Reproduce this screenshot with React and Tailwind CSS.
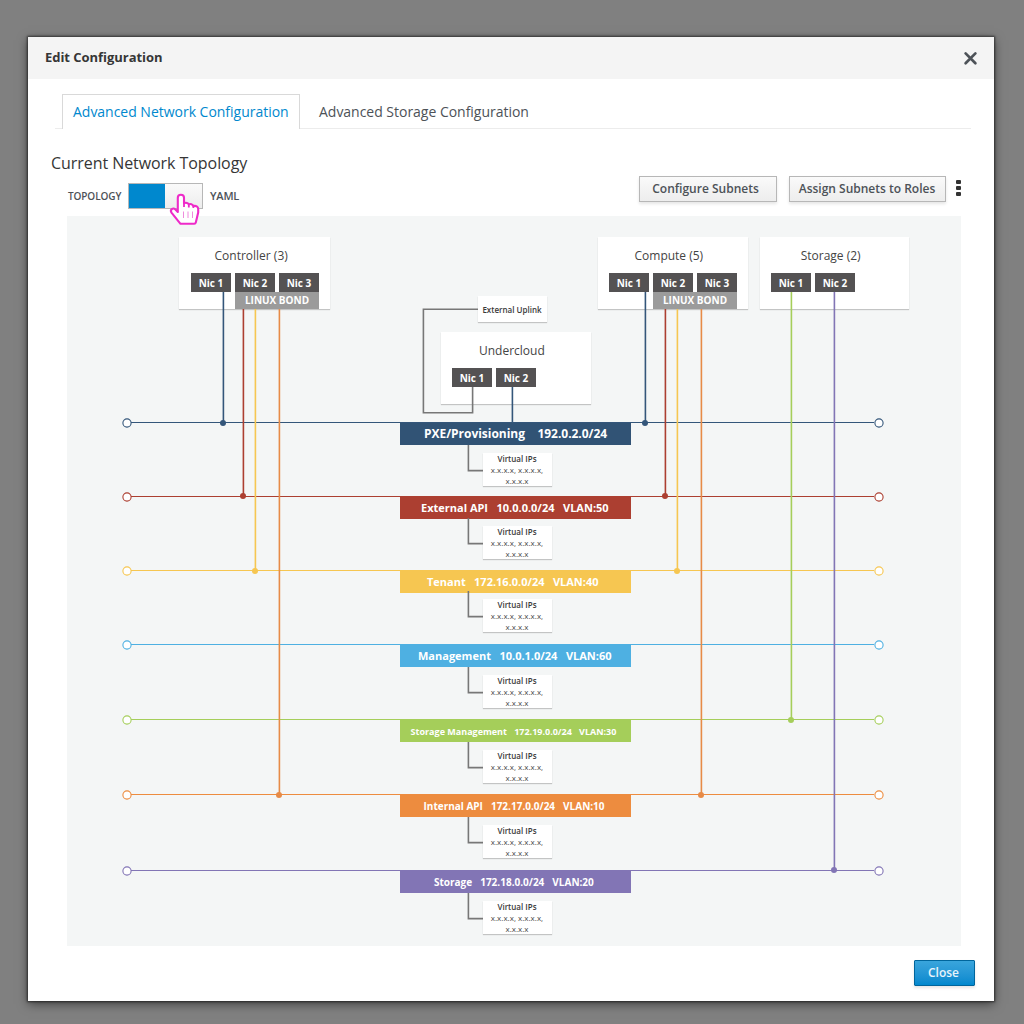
const NETWORKS = [
  { rail: 422, color: "#34567a", bg: "bg-[#315375]", ring: 423, vip: 453, tail: 445, text: "text-[12px] pl-[24px] gap-[12.5px] leading-[23px] tracking-[-0.03px]", parts: ["PXE/Provisioning", "192.0.2.0/24"] },
  { rail: 496, color: "#ac3f31", bg: "bg-[#ac3f31]", ring: 497, vip: 526, tail: 518, text: "text-[11px] pl-[21px] gap-[8.5px] leading-[24px]", parts: ["External API", "10.0.0.0/24", "VLAN:50"] },
  { rail: 570, color: "#f6c651", bg: "bg-[#f6c651]", ring: 571, vip: 599, tail: 591, text: "text-[11px] pl-[27px] gap-[8.3px] leading-[24px]", parts: ["Tenant", "172.16.0.0/24", "VLAN:40"] },
  { rail: 644, color: "#4eb0e2", bg: "bg-[#4eb0e2]", ring: 645, vip: 675, tail: 667, text: "text-[11px] pl-[18px] gap-[8.5px] leading-[24px]", parts: ["Management", "10.0.1.0/24", "VLAN:60"] },
  { rail: 719, color: "#a5ce5a", bg: "bg-[#a5ce5a]", ring: 720, vip: 750, tail: 742, text: "text-[9px] pl-[10.6px] gap-[7.2px] leading-[25px]", parts: ["Storage Management", "172.19.0.0/24", "VLAN:30"] },
  { rail: 794, color: "#ed8c3f", bg: "bg-[#ed8c3f]", ring: 795, vip: 825, tail: 817, text: "text-[10px] pl-[23.5px] gap-[8px] leading-[24px]", parts: ["Internal API", "172.17.0.0/24", "VLAN:10"] },
  { rail: 870, color: "#8275b5", bg: "bg-[#8275b5]", ring: 871, vip: 901, tail: 893, text: "text-[10px] pl-[34px] gap-[8px] leading-[24px]", parts: ["Storage", "172.18.0.0/24", "VLAN:20"] },
];

const WIRES = [
  [223.4, 292, 423, "#34567a"], [243.4, 309, 496, "#ac3f31"], [255.4, 309, 571, "#f6c651"], [279.4, 309, 795, "#e78b47"],
  [645.4, 292, 423, "#34567a"], [665.4, 309, 496, "#ac3f31"], [677.4, 309, 571, "#f6c651"], [701.4, 309, 795, "#e78b47"],
  [791.4, 292, 720, "#a5ce5a"], [834.4, 292, 870, "#8275b5"],
];

function NodeCard({ place, title, titlePad, nics, bond }) {
  return (
    <div className={"absolute h-[72px] bg-white shadow-[0_1px_1px_rgba(0,0,0,0.2)] " + place}>
      <div className={"h-[36px] whitespace-nowrap pt-[9px] text-[12px] leading-[20px] text-[#444] " + titlePad}>{title}</div>
      <div className="flex gap-1">
        {nics.map((n) => (
          <div key={n} className="h-[19px] w-10 bg-[#545253] text-center text-[10px] font-bold leading-[20px] text-white">{n}</div>
        ))}
      </div>
      {bond && <div className="ml-11 h-[17px] w-[84px] bg-[#9b9b9b] text-center text-[10px] font-bold leading-[17px] text-white">LINUX BOND</div>}
    </div>
  );
}

function VirtualIps({ top }) {
  return (
    <div className="absolute left-[416px] h-[33px] w-[69px] bg-white pr-px text-center text-[8px] leading-[11px] text-[#4a4a4a] shadow-[0_1px_1px_rgba(0,0,0,0.2)]" style={{ top }}>
      <div className="font-semibold text-[#3a3a3a]">Virtual IPs</div>
      <div className="whitespace-nowrap">x.x.x.x, x.x.x.x,</div>
      <div>x.x.x.x</div>
    </div>
  );
}

function Wiring() {
  return (
    <svg className="absolute inset-0" width="894" height="730" viewBox="67 216 894 730" fill="none">
      {NETWORKS.map((n) => (
        <g key={n.rail} stroke={n.color}>
          <path d={`M131 ${n.rail + 0.5}H874`} strokeWidth="1" />
          <circle cx="127" cy={n.ring} r="4.1" fill="#fff" strokeWidth="1.1" />
          <circle cx="879" cy={n.ring} r="4.1" fill="#fff" strokeWidth="1.1" />
          <path d={`M468.4 ${n.tail}V${n.vip + 17.6}H483`} stroke="#777" strokeWidth="1.6" />
        </g>
      ))}
      {WIRES.map(([x, from, to, color]) => (
        <g key={x}>
          <path d={`M${x} ${from}V${to}`} stroke={color} strokeWidth="1.6" />
          <circle cx={x - 0.4} cy={to} r="3" fill={color} />
        </g>
      ))}
      <path d="M478 309.3H423.4V412.7H472.6V387" stroke="#777" strokeWidth="1.6" />
      <path d="M512.4 387V422" stroke="#34567a" strokeWidth="1.6" />
    </svg>
  );
}

function Topology() {
  return (
    <div className="relative ml-[39px] h-[730px] w-[894px] bg-[#f4f6f6]">
      <NodeCard place="left-[112px] top-[21px] w-[151px] pl-3" titlePad="pl-[23.5px]" title="Controller (3)" nics={["Nic 1", "Nic 2", "Nic 3"]} bond />
      <NodeCard place="left-[531px] top-[21px] w-[150px] pl-[11px]" titlePad="pl-[25.5px]" title="Compute (5)" nics={["Nic 1", "Nic 2", "Nic 3"]} bond />
      <NodeCard place="left-[693px] top-[21px] w-[149px] pl-[11px]" titlePad="pl-[29.7px]" title="Storage (2)" nics={["Nic 1", "Nic 2"]} />
      <NodeCard place="left-[374px] top-[116px] w-[150px] pl-[11px]" titlePad="pl-[27px]" title="Undercloud" nics={["Nic 1", "Nic 2"]} />
      <div className="absolute left-[411px] top-[80px] h-[26px] w-[69px] whitespace-nowrap bg-white pr-px text-center text-[8px] font-semibold leading-[27px] text-[#3a3a3a] shadow-[0_1px_1px_rgba(0,0,0,0.2)]">External Uplink</div>
      {NETWORKS.map((n) => <VirtualIps key={n.vip} top={n.vip - 216} />)}
      {NETWORKS.map((n) => (
        <div key={n.rail} className={"absolute left-[333px] flex h-[23px] w-[231px] whitespace-nowrap font-bold text-white " + n.bg + " " + n.text} style={{ top: n.rail - 216 }}>
          {n.parts.map((p) => <span key={p}>{p}</span>)}
        </div>
      ))}
      <Wiring />
    </div>
  );
}

function PointerHand() {
  return (
    <svg className="absolute left-[39px] top-[8px]" width="32" height="34" viewBox="168 192 32 34" fill="#fff">
      <path d="M177.8 209V197.8C177.8 193.8 184 193.8 184 197.8V203.2C186 202.2 188.2 203 188.8 204.4C190.4 203.6 192.6 204.2 193.4 206C196 205.4 198.2 206.6 198.2 209V212.5L195.8 222.6Q195.5 223.8 194.2 223.8H180.5L171.5 212.6C169.6 209.6 173 207.4 175.2 209.2L177.8 212Z" stroke="#ee2bc9" strokeWidth="2.1" strokeLinejoin="round" />
      <path d="M184 203V207M188.8 204V207.5M193.4 205.5V208" stroke="#ee2bc9" strokeWidth="1.8" />
      <path d="M183.5 211.5V218M188 211.5V218M192.5 211.5V218" stroke="#ef8bdc" strokeWidth="1" />
    </svg>
  );
}

export default function App() {
  const button = "h-[26px] whitespace-nowrap border border-[#b7b7b7] bg-linear-to-b from-[#fafafa] to-[#ededed] text-center text-[12px] font-semibold leading-[24px] text-[#4d5258] shadow-[0_2px_3px_rgba(3,3,3,0.1)]";
  return (
    <div className="h-[1024px] w-[1024px] bg-[#808080] pl-7 pt-[37px] font-['Open_Sans',sans-serif]">
      <div className="flex h-[964px] w-[966px] flex-col bg-white shadow-[0_0_2px_1px_rgba(0,0,0,0.55),0_3px_10px_rgba(0,0,0,0.5)]">
        <header className="flex h-[42px] shrink-0 items-center justify-between bg-[#f4f4f4] pl-[17px] pr-[16px]">
          <h1 className="text-[13px] font-bold tracking-[-0.04px] text-[#363636]">Edit Configuration</h1>
          <svg width="15" height="15" viewBox="0 0 15 15" stroke="#4d5258" strokeWidth="2.7" strokeLinecap="round"><path d="M2.6 2.4L12.4 12.2M12.4 2.4L2.6 12.2" /></svg>
        </header>
        <nav className="ml-[27px] mt-[15px] flex h-[35px] w-[916px] shrink-0 border-b border-[#ececec] pl-[7px] text-[14px] leading-[34px]">
          <div className="h-[35px] w-[238px] whitespace-nowrap border border-b-0 border-[#d9d9d9] bg-white pl-[10px] tracking-[-0.02px] text-[#0088ce]">Advanced Network Configuration</div>
          <div className="whitespace-nowrap pl-[19px] pt-px tracking-[-0.02px] text-[#4d5258]">Advanced Storage Configuration</div>
        </nav>
        <section className="flex h-[87px] shrink-0 justify-between pl-[23px] pr-[33px]">
          <div>
            <h2 className="mt-[22px] whitespace-nowrap text-[16px] leading-6 tracking-[-0.06px] text-[#363636]">Current Network Topology</h2>
            <div className="relative z-10 mt-[8px] flex h-[26px] items-center whitespace-nowrap pl-[17px] text-[#4d5258]">
              <span className="w-[60px] text-[10px] font-semibold leading-[25px] tracking-[-0.1px]">TOPOLOGY</span>
              <div className="relative flex h-[26px] w-[75px] border border-[#b7b7b7] bg-linear-to-b from-[#fafafa] to-[#ededed]">
                <div className="h-full w-9 bg-[#0088ce]" />
                <PointerHand />
              </div>
              <span className="pl-[7px] text-[11px] font-semibold leading-[26px] tracking-[-0.2px]">YAML</span>
            </div>
          </div>
          <div className="flex items-start pt-[47px]">
            <button className={button + " w-[138px] pr-[5px]"}>Configure Subnets</button>
            <button className={button + " ml-3 w-[157px] pr-px"}>Assign Subnets to Roles</button>
            <div className="ml-[10px] mt-1 flex flex-col gap-[2px]">
              <i className="h-1 w-[5px] rounded-[1px] bg-[#333]" />
              <i className="h-1 w-[5px] rounded-[1px] bg-[#333]" />
              <i className="h-1 w-[5px] rounded-[1px] bg-[#333]" />
            </div>
          </div>
        </section>
        <Topology />
        <footer className="flex justify-end pr-[19px] pt-[14px]">
          <button className="h-[26px] w-[61px] rounded-[1px] border border-[#00659c] bg-linear-to-b from-[#39a5dc] to-[#0088ce] pr-[2px] text-[12px] font-semibold leading-[24px] text-[#e8f4fb] shadow-[0_2px_3px_rgba(3,3,3,0.1)]">Close</button>
        </footer>
      </div>
    </div>
  );
}
